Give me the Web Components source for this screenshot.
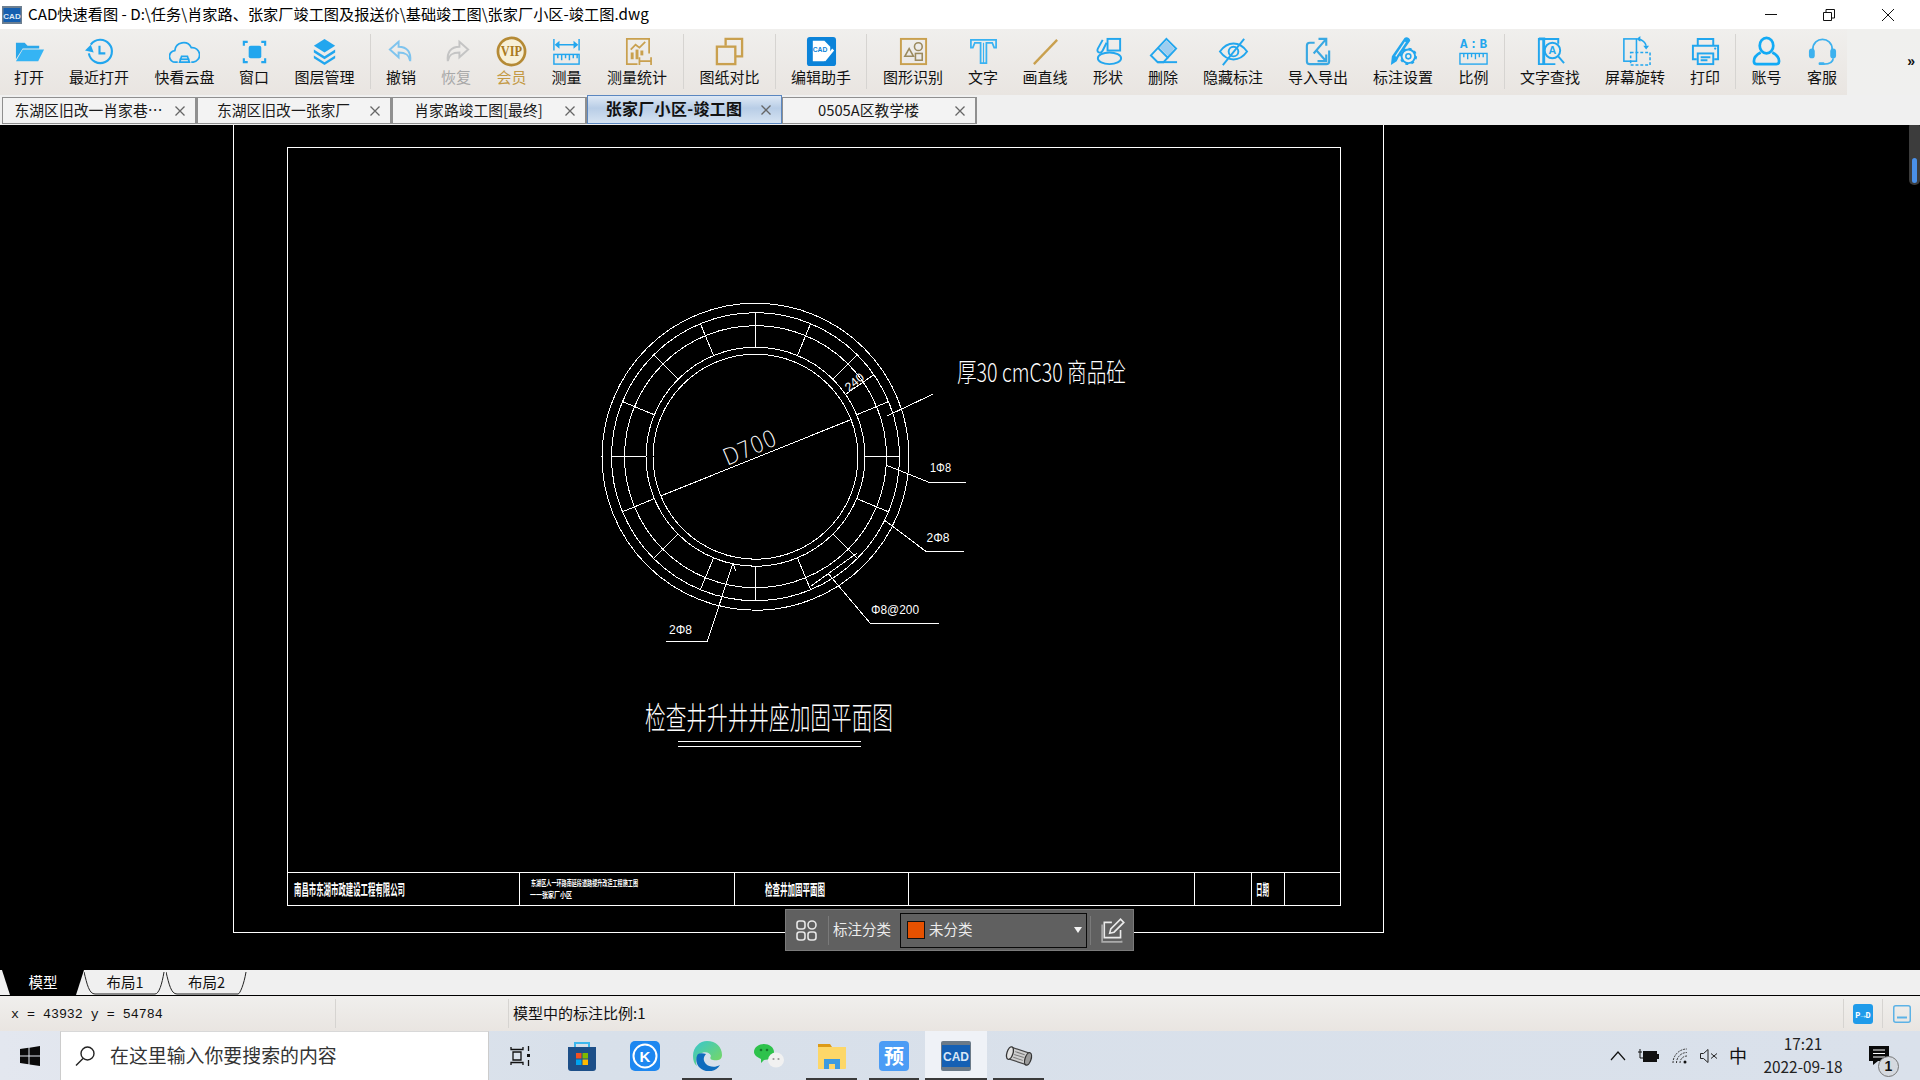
<!DOCTYPE html>
<html lang="zh-CN">
<head>
<meta charset="utf-8">
<title>CAD快速看图</title>
<style>
    html, body { margin: 0; padding: 0; background: #000; }
    body {
        width: 1920px;
        height: 1080px;
        overflow: hidden;
        display: flex;
        flex-direction: column;
        font-family: "Noto Sans CJK SC", "Liberation Sans", sans-serif;
    }
</style>
</head>
<body>
    <cad-title-bar>CAD快速看图 - D:\任务\肖家路、张家厂竣工图及报送价\基础竣工图\张家厂小区-竣工图.dwg</cad-title-bar>
    <cad-toolbar></cad-toolbar>
    <cad-tab-bar>
        <cad-tab>东湖区旧改一肖家巷…</cad-tab>
        <cad-tab>东湖区旧改一张家厂</cad-tab>
        <cad-tab>肖家路竣工图[最终]</cad-tab>
        <cad-tab active>张家厂小区-竣工图</cad-tab>
        <cad-tab>0505A区教学楼</cad-tab>
    </cad-tab-bar>
    <cad-canvas>
        <cad-mark-panel></cad-mark-panel>
    </cad-canvas>
    <cad-layout-tabs></cad-layout-tabs>
    <cad-status-bar></cad-status-bar>
    <win-taskbar></win-taskbar>

<script>
    const BLUE = '#22a6ee';
    const GOLD = '#c9a04e';

    // toolbar icons, all on a 32x32 box
    const ICONS = {
        open: `<path d="M2 7h9l3 3h12v3H9L2 24z" fill="#2aa7ea"/><path d="M9 14h22l-6 12H2z" fill="#35b4f4"/>`,
        recent: `<g fill="none" stroke="${BLUE}" stroke-width="2.2"><path d="M7 9a12 12 0 1 1-2 9"/><path d="M16 10v8h6"/></g><path d="M1 15l6-6 3 8z" fill="${BLUE}"/>`,
        cloud: `<g fill="none" stroke="${BLUE}" stroke-width="1.8"><path d="M9 27H7a6 6 0 0 1-1-12 9 9 0 0 1 17-3 7.500 7.500 0 0 1 2 15h-2"/><path d="M11 27l2-6h6l2 6z"/><path d="M11 24h10"/></g>`,
        window: `<rect x="10" y="10" width="13" height="13" rx="2" fill="${BLUE}"/><g fill="none" stroke="${BLUE}" stroke-width="2.200"><path d="M5 10V6h4M23 6h4v4M27 23v4h-4M9 27H5v-4"/></g>`,
        layers: `<g fill="${BLUE}"><path d="M16 3l11 7-11 7-11-7z"/><path d="M5 14l11 7 11-7v3l-11 7-11-7z"/><path d="M5 20l11 7 11-7v3l-11 7-11-7z"/></g>`,
        undo: `<path d="M13 6L4 14l9 8v-5c7 0 11 2 12 9 1-9-3-15-12-15z" fill="none" stroke="#7fc4ee" stroke-width="2"/>`,
        redo: `<path d="M19 6l9 8-9 8v-5c-7 0-11 2-12 9-1-9 3-15 12-15z" fill="none" stroke="#c4c4c4" stroke-width="2"/>`,
        vip: `<circle cx="16" cy="16" r="14" fill="#f7f0d8" stroke="#b58a35" stroke-width="2.800"/><text x="16" y="20.500" text-anchor="middle" font-family="Liberation Serif" font-weight="700" font-size="14" textLength="22" lengthAdjust="spacingAndGlyphs" fill="#a97a20">VIP</text>`,
        measure: `<g fill="none" stroke="${BLUE}" stroke-width="1.500"><path d="M3 3v12M29 3v12M5 9h22"/><path d="M5 9l3-2.500v5zM27 9l-3-2.500v5z" fill="${BLUE}"/><rect x="3" y="19" width="26" height="10"/><path d="M7 19v4M11 19v6M15 19v4M19 19v6M23 19v4M27 19v4"/></g>`,
        stats: `<g fill="none" stroke="${GOLD}" stroke-width="1.800"><path d="M28 18V3H5v26h11"/><path d="M9 14l5-5 4 3 6-6"/></g><g fill="${GOLD}"><rect x="9" y="17" width="3" height="7"/><rect x="14" y="14" width="3" height="10"/><rect x="19" y="15" width="3" height="5"/></g><path d="M18 26h12M18 22v8M30 22v8" stroke="${GOLD}" stroke-width="1.800" fill="none"/>`,
        compare: `<g fill="none" stroke="${GOLD}" stroke-width="2.400"><path d="M12 10V3h17v18h-7"/><rect x="3" y="11" width="19" height="18"/></g>`,
        helper: `<rect x="1" y="1" width="30" height="30" rx="3" fill="#0b83d9"/><path d="M7 5h12l6 6v6l-6 9H7z" fill="#fff"/><text x="14.500" y="17" text-anchor="middle" font-family="Liberation Sans" font-weight="700" font-size="7" fill="#0b83d9">CAD</text><path d="M18 25l9-12 2 2-9 11z" fill="#fff"/>`,
        recognize: `<rect x="3" y="3" width="26" height="26" fill="none" stroke="${GOLD}" stroke-width="2"/><g fill="none" stroke="#9b8a5e" stroke-width="1.600"><path d="M7 21l4.500-8 4.500 8z"/><circle cx="21" cy="11" r="4"/><rect x="18" y="18" width="7" height="7"/></g>`,
        text: `<path d="M3 4h26v8h-2l-2-5h-6v21h-6V7H7l-2 5H3z" fill="none" stroke="#39b2f2" stroke-width="1.800"/><path d="M16 7v21" stroke="#39b2f2" stroke-width="1.200"/>`,
        line: `<path d="M4 29L28 4" stroke="${GOLD}" stroke-width="2.400"/>`,
        shape: `<g fill="none" stroke="${BLUE}" stroke-width="2"><rect x="15" y="3" width="13" height="12"/><ellipse cx="17" cy="23" rx="12" ry="6"/><path d="M10 4L5 13c-2 4 3 6 5 2l4-8"/></g>`,
        eraser: `<path d="M19 5l8 8-6 8-9-9z" fill="#9ccdf0"/><g fill="none" stroke="${BLUE}" stroke-width="2"><path d="M19 3l10 10-13 14H10l-7-7z"/><path d="M10 27h20"/><path d="M10 12l11 11"/></g>`,
        hide: `<g fill="none" stroke="${BLUE}" stroke-width="2"><path d="M2 16c8-11 20-11 28 0-8 11-20 11-28 0z"/><circle cx="16" cy="16" r="5"/><path d="M5 30L27 3"/></g>`,
        transfer: `<g fill="none" stroke="#39a8e2" stroke-width="2.200"><path d="M12 7H7a3 3 0 0 0-3 3v16a3 3 0 0 0 3 3h17a3 3 0 0 0 3-3V15"/><path d="M11 18L24 3M16 3h8v7"/><path d="M15 26h9v-7M23 25L14 15"/></g>`,
        marksetting: `<path d="M3 30l1-9L17 2c2-2 6 0 6 3L11 22l-2 4z" fill="${BLUE}"/><path d="M8 21l10-15" stroke="#f0efed" stroke-width="1.200"/><circle cx="21" cy="21" r="7" fill="#f0efed" stroke="${BLUE}" stroke-width="2"/><circle cx="21" cy="21" r="8" fill="none" stroke="${BLUE}" stroke-width="2" stroke-dasharray="3 3.280"/><circle cx="21" cy="21" r="2.600" fill="none" stroke="${BLUE}" stroke-width="1.600"/>`,
        ratio: `<text x="16" y="12" text-anchor="middle" font-family="Liberation Mono" font-weight="700" font-size="13" textLength="28" fill="${BLUE}">A:B</text><g fill="none" stroke="${BLUE}" stroke-width="1.400"><rect x="2" y="18" width="28" height="11"/><path d="M6 18v4M10 18v6M14 18v4M18 18v6M22 18v4M26 18v4"/></g>`,
        find: `<g fill="none" stroke="${BLUE}" stroke-width="2"><path d="M24 8V3H4v26h17"/><path d="M4 3h5v26"  stroke-width="3"/><circle cx="18" cy="15" r="8"/><path d="M24 21l6 7"/></g><text x="18" y="19" text-anchor="middle" font-family="Liberation Sans" font-weight="700" font-size="11" fill="${BLUE}">A</text>`,
        rotate: `<g fill="none" stroke="${BLUE}" stroke-width="1.600"><rect x="4" y="3" width="13" height="23"/><rect x="11" y="17" width="20" height="13" stroke-dasharray="3 2"/><path d="M19 3c4 1 7 3 8 7"/></g><path d="M21 0v6l-4-3zM24 10h6l-3 4z" fill="${BLUE}"/>`,
        print: `<g fill="none" stroke="${BLUE}" stroke-width="2"><path d="M8 10V3h16v7"/><path d="M7 24H3V10h26v14h-4"/><rect x="8" y="18" width="16" height="11"/><path d="M11 22h10M11 25h7"/></g><circle cx="26" cy="13" r="1.200" fill="${BLUE}"/>`,
        account: `<g fill="none" stroke="#12aaf5" stroke-width="2.800"><ellipse cx="16" cy="10" rx="7" ry="8"/><path d="M10 17c-4 2-7 5-7 9 0 2 1 3 3 3h20c2 0 3-1 3-3 0-4-3-7-7-9"/></g>`,
        service: `<path d="M6 17v-3C6 0 26 0 26 14v3" fill="none" stroke="#3db1ee" stroke-width="1.800"/><rect x="2" y="13" width="6" height="10" rx="3" fill="#3db1ee"/><rect x="24" y="13" width="6" height="10" rx="3" fill="#3db1ee"/><path d="M27 23c0 4-4 6-10 6" fill="none" stroke="#3db1ee" stroke-width="1.800"/><rect x="12" y="27" width="6" height="3" rx="1" fill="#3db1ee"/>`
    };

    const TOOLS = [
        ['open', '打开', 58], ['recent', '最近打开', 82], ['cloud', '快看云盘', 89], ['window', '窗口', 50], ['layers', '图层管理', 91], 0,
        ['undo', '撤销', 60], ['redo', '恢复', 50, '#a8a8a8'], ['vip', '会员', 61, '#c49a45'], ['measure', '测量', 49], ['stats', '测量统计', 92], 0,
        ['compare', '图纸对比', 91], 0,
        ['helper', '编辑助手', 90], 0,
        ['recognize', '图形识别', 92], ['text', '文字', 48], ['line', '画直线', 76], ['shape', '形状', 50], ['eraser', '删除', 60], ['hide', '隐藏标注', 80], ['transfer', '导入导出', 90], ['marksetting', '标注设置', 80], ['ratio', '比例', 61], 0,
        ['find', '文字查找', 90], ['rotate', '屏幕旋转', 80], ['print', '打印', 60], 0,
        ['account', '账号', 61], ['service', '客服', 50]
    ];

    class CadTitleBar extends HTMLElement {
        constructor() {
            super();
            this.attachShadow({ mode: 'open' }).innerHTML = `
                <style>
                    :host { display: flex; align-items: center; height: 29px; background: #fff; color: #000; font-size: 15.200px; flex: none; }
                    .logo { margin: 0 6px 0 2px; flex: none; }
                    .caption { flex: 1; white-space: nowrap; line-height: 27px; padding-bottom: 2px; }
                    .ctl { width: 58.5px; height: 29px; display: flex; align-items: center; justify-content: center; flex: none; }
                    .end { width: 3px; }
                </style>
                <svg class="logo" width="20" height="18" viewBox="0 0 20 18">
                    <rect width="20" height="18" fill="#6d7f90"/><rect x="1.500" y="2" width="17" height="14" fill="#155fb0"/>
                    <text x="10" y="12.500" text-anchor="middle" font-family="Liberation Sans" font-weight="700" font-size="8" fill="#dfe9f5">CAD</text>
                </svg>
                <span class="caption"><slot></slot></span>
                <span class="ctl"><svg width="12" height="12"><path d="M0 5.500h12" stroke="#111"/></svg></span>
                <span class="ctl"><svg width="12" height="12"><path d="M.5 3.500h8v8h-8zM3 3.500V.5h8.500V9H8.500" fill="none" stroke="#111"/></svg></span>
                <span class="ctl"><svg width="12" height="12"><path d="M0 0l12 12M12 0L0 12" stroke="#111"/></svg></span>
                <span class="end"></span>`;
        }
    }

    class CadTool extends HTMLElement {
        constructor() {
            super();
            this.attachShadow({ mode: 'open' }).innerHTML = `
                <style>
                    :host { display: flex; flex-direction: column; align-items: center; flex: none; padding-top: 7px; box-sizing: border-box; height: 66px; }
                    svg { display: block; width: 31px; height: 31px; }
                    .label { font-size: 15px; line-height: 20px; white-space: nowrap; color: var(--tool-color, #111); }
                </style>
                <svg viewBox="0 0 32 32"></svg>
                <div class="label"><slot></slot></div>`;
        }
        connectedCallback() {
            this.style.width = this.getAttribute('w') + 'px';
            this.shadowRoot.querySelector('svg').innerHTML = ICONS[this.getAttribute('icon')];
        }
    }

    class CadToolbar extends HTMLElement {
        constructor() {
            super();
            this.attachShadow({ mode: 'open' }).innerHTML = `
                <style>
                    :host { display: flex; height: 66px; flex: none; background: linear-gradient(#f0f0ee, #f0f0ef); }
                    .tools { display: flex; width: 1847px; background: linear-gradient(#f0efed, #e9e5e1); }
                    .sep { width: 1px; height: 55px; margin-top: 5px; background: #d6d4d1; flex: none; }
                    .more { flex: 1; text-align: right; padding: 24px 5px 0 0; font: 700 14px "Liberation Sans", sans-serif; color: #111; }
                </style>
                <div class="tools"></div>
                <div class="more">»</div>`;
            const box = this.shadowRoot.querySelector('.tools');
            TOOLS.forEach(t => {
                if (!t) {
                    box.insertAdjacentHTML('beforeend', '<div class="sep"></div>');
                    return;
                }
                const el = document.createElement('cad-tool');
                el.setAttribute('icon', t[0]);
                el.setAttribute('w', t[2]);
                if (t[3]) el.style.setProperty('--tool-color', t[3]);
                el.textContent = t[1];
                box.appendChild(el);
            });
        }
    }

    class CadTabBar extends HTMLElement {
        constructor() {
            super();
            this.attachShadow({ mode: 'open' }).innerHTML = `
                <style>
                    :host { display: flex; align-items: flex-end; height: 30px; padding: 0 0 1px 2px; background: #f0f0f0; flex: none; box-sizing: border-box; }
                </style>
                <slot></slot>`;
        }
    }

    class CadTab extends HTMLElement {
        constructor() {
            super();
            this.attachShadow({ mode: 'open' }).innerHTML = `
                <style>
                    :host {
                        display: flex; align-items: center; width: 195px; height: 27px; box-sizing: border-box;
                        border: 1px solid #8f8f8f; border-right-width: 2px; border-bottom-width: 1px;
                        background: #f3f3f3; color: #1a1a1a; font-size: 14.800px; position: relative;
                    }
                    :host([active]) {
                        height: 29px; border: 1px solid #5b87c0;
                        background: linear-gradient(#dfe9f5, #b8cde6 45%, #d6e3f2); font-weight: 700; font-size: 16px; letter-spacing: .3px; color: #111;
                    }
                    .name { flex: 1; text-align: center; white-space: nowrap; padding-bottom: 3px; }
                    .close { width: 12px; height: 12px; margin-right: 9px; flex: none; }
                </style>
                <span class="name"><slot></slot></span>
                <svg class="close" viewBox="0 0 12 12"><path d="M1.500 1.500l9 9M10.500 1.500l-9 9" stroke="#666" stroke-width="1.300"/></svg>`;
        }
    }

    class CadCanvas extends HTMLElement {
        constructor() {
            super();
            const cx = 755.5, cy = 456.7;
            const rings = [153.5, 144, 131, 109.5, 102.5].map(r => `<circle cx="${cx}" cy="${cy}" r="${r}"/>`).join('');
            let ticks = '';
            for (let i = 0; i < 16; i++) {
                const a = i * Math.PI / 8;
                const c = Math.cos(a), s = Math.sin(a);
                ticks += `<path d="M${cx + c * 109.5} ${cy + s * 109.5}L${cx + c * 144.5} ${cy + s * 144.5}"/>`;
            }
            this.attachShadow({ mode: 'open' }).innerHTML = `
                <style>
                    :host { display: block; position: relative; height: 845px; background: #000; flex: none; overflow: hidden; }
                    svg { position: absolute; left: 0; top: 0; }
                    .thumb { position: absolute; right: 0; top: -3px; width: 11px; height: 63px; background: #3c3c3c; border-radius: 5px; }
                    .thumb i { position: absolute; left: 3px; top: 36px; width: 5px; height: 25px; background: #4a90e8; border-radius: 3px; }
                    text { fill: #fff; font-family: "Noto Sans CJK SC", sans-serif; font-weight: 400; }
                    .latin { font-family: "DejaVu Sans", sans-serif; font-weight: 200; }
                    .small { font-family: "Liberation Sans", sans-serif; font-weight: 400; }
                    .block { font-weight: 700; }
                </style>
                <svg width="1920" height="845" viewBox="0 125 1920 845">
                    <g fill="none" stroke="#fff" stroke-width="1" shape-rendering="crispEdges">
                        <path d="M233.500 125V932.500H1383.500V125"/>
                        <path d="M287.500 147.500H1340.500V905.500H287.500Z"/>
                        <path d="M287.500 872.500H1340.500M519.500 872.500V905M734.500 872.500V905M908.500 872.500V905M1194.500 872.500V905M1251.500 872.500V905M1284.500 872.500V905"/>
                        <path d="M678 741.500H860.500M678 746.500H860.500"/>
                        ${rings}${ticks}
                        <path d="M660.600 496L850 420M887 416L932.600 394.300"/>
                        <path d="M885.600 465L929.600 482.500H966M885 520.700L926 551.500H963.600M828.600 574L870.400 623.500H939M732.800 563.300L707.300 641.500H666"/>
                        <path d="M811 586L856.700 553.300M845.600 394.300L873.400 375M732.800 563.300L736 571"/>
                    </g>
                    <text class="latin" font-size="23" textLength="56" lengthAdjust="spacingAndGlyphs" transform="translate(727 466) rotate(-23)">D700</text>
                    <text class="small" font-size="12" textLength="21" lengthAdjust="spacingAndGlyphs" transform="translate(849 392) rotate(-40)">240</text>
                    <text class="small" font-size="13" x="930" y="472" textLength="21" lengthAdjust="spacingAndGlyphs">1Φ8</text>
                    <text class="small" font-size="13" x="926.500" y="542" textLength="23" lengthAdjust="spacingAndGlyphs">2Φ8</text>
                    <text class="small" font-size="13" x="871" y="614" textLength="48" lengthAdjust="spacingAndGlyphs">Φ8@200</text>
                    <text class="small" font-size="13" x="669" y="634" textLength="23" lengthAdjust="spacingAndGlyphs">2Φ8</text>
                    <text font-size="26" x="957" y="382" textLength="169" lengthAdjust="spacingAndGlyphs" style="font-weight:300">厚30 cmC30 商品砼</text>
                    <text font-size="31" x="645" y="729" textLength="248" lengthAdjust="spacingAndGlyphs" style="font-weight:300">检查井升井井座加固平面图</text>
                    <text class="block" font-size="15" x="294" y="895" textLength="111" lengthAdjust="spacingAndGlyphs">南昌市东湖市政建设工程有限公司</text>
                    <text class="block" font-size="8" x="531" y="886" textLength="107" lengthAdjust="spacingAndGlyphs">东湖区人一环路南延段道路提升改造工程施工图</text>
                    <text class="block" font-size="8" x="530" y="898" textLength="42" lengthAdjust="spacingAndGlyphs">一一张家厂小区</text>
                    <text class="block" font-size="15" x="765" y="895" textLength="60" lengthAdjust="spacingAndGlyphs">检查井加固平面图</text>
                    <text class="block" font-size="15" x="1256" y="895" textLength="13" lengthAdjust="spacingAndGlyphs">日期</text>
                </svg>
                <div class="thumb"><i></i></div>
                <slot></slot>`;
        }
    }

    class CadMarkPanel extends HTMLElement {
        constructor() {
            super();
            this.attachShadow({ mode: 'open' }).innerHTML = `
                <style>
                    :host {
                        position: absolute; left: 785px; top: 784px; width: 349px; height: 42px; box-sizing: border-box;
                        display: flex; align-items: center; background: #606060; border: 1px solid #7b7b7b; color: #ececec; font-size: 14.500px;
                    }
                    .grid { width: 21px; height: 21px; margin-left: 10px; flex: none; }
                    .sep { width: 1px; height: 29px; background: #7a7a7a; flex: none; }
                    .label { margin: 0 9px 3px 4px; white-space: nowrap; }
                    .drop { width: 187px; height: 35px; box-sizing: border-box; border: 1px solid #0a0a0a; display: flex; align-items: center; padding-left: 6px; flex: none; }
                    .swatch { width: 18px; height: 18px; box-sizing: border-box; background: #e65100; border: 1px solid #111; margin-right: 4px; flex: none; }
                    .val { flex: 1; padding-bottom: 3px; }
                    .arrow { width: 0; height: 0; border-left: 4.500px solid transparent; border-right: 4.500px solid transparent; border-top: 6px solid #f4f4f4; margin-right: 4px; }
                    .edit { width: 25px; height: 26px; margin-left: 10px; flex: none; }
                </style>
                <svg class="grid" viewBox="0 0 21 21" fill="none" stroke="#e6e6e6" stroke-width="1.600">
                    <rect x="1" y="1" width="8" height="8" rx="2.500"/><rect x="12" y="1" width="8" height="8" rx="4"/>
                    <rect x="1" y="12" width="8" height="8" rx="2.500"/><rect x="12" y="12" width="8" height="8" rx="2.500"/>
                </svg>
                <span class="sep" style="margin-left:11px"></span>
                <span class="label">标注分类</span>
                <div class="drop"><span class="swatch"></span><span class="val">未分类</span><span class="arrow"></span></div>
                <span class="sep" style="margin-left:3px"></span>
                <svg class="edit" viewBox="0 0 23 24" fill="none" stroke="#eaeaea" stroke-width="1.500">
                    <path d="M10 5H3v14h15v-7"/><path d="M1 7v16h18v-1" stroke="#aaa"/>
                    <path d="M8 15l1-4 9-9 3 3-9 9z"/>
                </svg>`;
        }
    }

    class CadLayoutTabs extends HTMLElement {
        constructor() {
            super();
            this.attachShadow({ mode: 'open' }).innerHTML = `
                <style>
                    :host { display: flex; height: 26px; box-sizing: border-box; background: #f0f0f0; border-bottom: 1px solid #000; flex: none; font-size: 14.500px; color: #111; padding-left: 2px; }
                    .tab { position: relative; height: 25px; display: flex; align-items: center; justify-content: center; flex: none; }
                    .tab svg { position: absolute; left: 0; top: 0; }
                    .tab span { position: relative; padding-bottom: 2px; font-family: "Noto Sans CJK SC", "Liberation Sans", sans-serif; }
                    .on { color: #fff; }
                </style>
                <div class="tab on" style="width:82px">
                    <svg width="82" height="25"><path d="M0 0H82L74 25H8z" fill="#000"/></svg><span>模型</span>
                </div>
                <div class="tab" style="width:82px">
                    <svg width="82" height="25" fill="none" stroke="#222"><path d="M0 2C3 14 5 24 11 24H71C75 24 78 14 80 2"/></svg><span>布局1</span>
                </div>
                <div class="tab" style="width:81px">
                    <svg width="81" height="25" fill="none" stroke="#222"><path d="M0 2C3 14 5 24 11 24H72C74 24 78 14 80 2"/></svg><span>布局2</span>
                </div>`;
        }
    }

    class CadStatusBar extends HTMLElement {
        constructor() {
            super();
            this.attachShadow({ mode: 'open' }).innerHTML = `
                <style>
                    :host { display: flex; align-items: center; height: 35px; flex: none; background: linear-gradient(#f0efed, #e9e5e1); color: #111; font-size: 15px; }
                    .xy { width: 324px; padding: 2px 0 0 11px; font: 13.300px "Liberation Mono", monospace; flex: none; }
                    .sep { width: 1px; height: 29px; background: #d6d4d1; flex: none; }
                    .cell { width: 172px; flex: none; }
                    .scale { flex: 1; padding: 0 0 2px 4px; white-space: nowrap; }
                    .btn { width: 38px; display: flex; justify-content: center; flex: none; }
                </style>
                <span class="xy">x = 43932 y = 54784</span>
                <span class="sep"></span>
                <span class="cell"></span>
                <span class="sep"></span>
                <span class="scale">模型中的标注比例:1</span>
                <span class="sep"></span>
                <span class="btn">
                    <svg width="20" height="20"><rect width="20" height="20" rx="3" fill="#1f9bea"/><text x="10" y="13.500" text-anchor="middle" font-family="Liberation Mono" font-weight="700" font-size="8.500" fill="#fff">P→D</text></svg>
                </span>
                <span class="sep"></span>
                <span class="btn" style="width:37px">
                    <svg width="18" height="18" fill="none"><rect x=".75" y=".75" width="16.500" height="16.500" rx="2" stroke="#5cb2e6" stroke-width="1.500"/><path d="M4 12.500h10" stroke="#5cb2e6" stroke-width="2"/></svg>
                </span>`;
        }
    }

    class WinTaskbar extends HTMLElement {
        constructor() {
            super();
            const apps = [
                [false, false, `<svg width="21" height="20" fill="none" stroke="#111" stroke-width="1.300"><path d="M1 1v2.500h12V1M3 6h8v8H3zM1 19v-2.500h12V19M18.500 0v5M18.500 14v6"/><rect x="17" y="8" width="3" height="3" fill="#111" stroke="none"/></svg>`],
                [false, false, `<svg width="30" height="30"><path d="M8 6V2h14v4" fill="none" stroke="#3db7ee" stroke-width="2"/><path d="M1 6h28v21a3 3 0 0 1-3 3H4a3 3 0 0 1-3-3z" fill="#1d4f88"/><rect x="9" y="12" width="5.500" height="5.500" fill="#f25022"/><rect x="15.500" y="12" width="5.500" height="5.500" fill="#7fba00"/><rect x="9" y="18.500" width="5.500" height="5.500" fill="#00a4ef"/><rect x="15.500" y="18.500" width="5.500" height="5.500" fill="#ffb900"/></svg>`],
                [false, false, `<svg width="30" height="30"><rect width="30" height="30" rx="5" fill="#1d87f0"/><circle cx="15" cy="15" r="11.500" fill="none" stroke="#fff" stroke-width="2"/><text x="15" y="20.500" text-anchor="middle" font-family="Liberation Sans" font-weight="700" font-size="15" fill="#fff">K</text></svg>`],
                [true, false, `<svg width="30" height="30" viewBox="0 0 30 30"><defs><linearGradient id="e1" x1="0" y1="0" x2="1" y2="1"><stop offset="0" stop-color="#37c6d0"/><stop offset="1" stop-color="#7ed957"/></linearGradient></defs><path d="M1 15C1 6 8 0 15 0c9 0 15 6 15 14 0 5-5 6-9 5-3 0-3-3-2-4-1-4-7-5-11-2-4 3-5 8-3 12C2 23 1 19 1 15z" fill="url(#e1)"/><path d="M6 13c-4 6-1 15 8 17 6 1 11-1 14-6-5 3-11 2-14-1-3-3-3-7 0-10-3-1-6-1-8 0z" fill="#0f6cbd"/></svg>`],
                [false, false, `<svg width="30" height="28" viewBox="0 0 30 28"><path d="M10 2c5 0 10 3 10 8 0 5-5 8-10 8l-3 3v-4C3 15 0 13 0 10c0-5 5-8 10-8z" fill="#2ec24c"/><circle cx="7" cy="8" r="1.300" fill="#167a2c"/><circle cx="13" cy="8" r="1.300" fill="#167a2c"/><ellipse cx="22" cy="18" rx="8" ry="7.500" fill="#f1f1f1"/><circle cx="19.500" cy="17" r="1.100" fill="#999"/><circle cx="24.500" cy="17" r="1.100" fill="#999"/></svg>`],
                [true, false, `<svg width="28" height="28"><path d="M0 2h12l2 3H0z" fill="#dd9a17"/><path d="M0 5h28v21a1 1 0 0 1-1 1H0z" fill="#fdd768"/><path d="M6 27V17h16v10h-5v-5h-6v5z" fill="#3d9be0"/></svg>`],
                [true, false, `<svg width="30" height="30"><rect width="30" height="30" rx="4" fill="#4b9cf5"/><text x="15" y="23" text-anchor="middle" font-family="Noto Sans CJK SC" font-weight="700" font-size="20" fill="#fff">预</text></svg>`],
                [true, true, `<svg width="30" height="30"><rect width="30" height="30" rx="2" fill="#6b7a88"/><rect x="1" y="4" width="28" height="22" fill="#1560b4"/><text x="15" y="20" text-anchor="middle" font-family="Liberation Sans" font-weight="700" font-size="12" fill="#d8e6f6">CAD</text></svg>`],
                [true, false, `<svg width="30" height="24" viewBox="0 0 30 24"><g transform="rotate(18 15 12)"><rect x="6" y="6" width="18" height="12" fill="#cfcfcf" stroke="#444" stroke-width="1.200"/><ellipse cx="5.500" cy="12" rx="3" ry="6.500" fill="#e2e2e2" stroke="#333" stroke-width="1.300"/><ellipse cx="24.500" cy="12" rx="3" ry="6.500" fill="#9a9a9a" stroke="#333" stroke-width="1.300"/><path d="M10 9h10M10 12h10M10 15h10" stroke="#7a7a7a"/></g></svg>`]
            ];
            const cells = apps.map(a => `<div class="app ${a[0] ? 'run' : ''} ${a[1] ? 'cur' : ''}">${a[2]}</div>`).join('');
            this.attachShadow({ mode: 'open' }).innerHTML = `
                <style>
                    :host { display: flex; height: 50px; flex: none; background: linear-gradient(90deg, #e3e7ef, #d8e0ea 30%, #dae1eb); color: #111; align-items: stretch; }
                    .start { width: 60px; display: flex; align-items: center; justify-content: center; flex: none; }
                    .search {
                        width: 429px; box-sizing: border-box; background: #fff; border: 1px solid #ccc; border-top-color: #d8d8d8;
                        display: flex; align-items: center; padding-left: 14px; gap: 15px; font-size: 18.900px; color: #333; flex: none;
                    }
                    .search span { padding-bottom: 3px; }
                    .app { width: 62.300px; display: flex; align-items: center; justify-content: center; position: relative; flex: none; box-sizing: border-box; }
                    .run::after { content: ""; position: absolute; left: 6px; right: 6px; bottom: 0; height: 3px; background: #3a3a3a; }
                    .cur { background: #eff2f7; }
                    .cur::after { left: 0; right: 0; }
                    .tray { flex: 1; display: flex; align-items: center; justify-content: flex-end; }
                    .tray > * { flex: none; }
                    .ime { font-size: 18px; margin: 0 13px 2px 11px; }
                    .clock { width: 86px; text-align: center; font-size: 15.400px; line-height: 23px; margin-right: 23px; padding-bottom: 3px; color: #222; }
                    .note { position: relative; width: 31px; height: 50px; margin-right: 20px; }
                    .note svg { position: absolute; left: 0; top: 15px; }
                    .badge { position: absolute; left: 9px; top: 25px; width: 19px; height: 19px; border-radius: 50%; background: #d5d9df; border: 1px solid #777; text-align: center; font: 700 14px/19px "Liberation Sans", sans-serif; }
                </style>
                <div class="start">
                    <svg width="20" height="20"><path d="M0 3l8.500-1.200V9.500H0zM9.500 1.700L20 0v9.500H9.500zM0 10.500h8.500v7.700L0 17zM9.500 10.500H20V20L9.500 18.400z" fill="#0a0a0a"/></svg>
                </div>
                <div class="search">
                    <svg width="20" height="20" fill="none" stroke="#222" stroke-width="1.400"><circle cx="12.500" cy="7.500" r="6.500"/><path d="M8 12.500L1 19.500"/></svg>
                    <span>在这里输入你要搜索的内容</span>
                </div>
                ${cells}
                <div class="tray">
                    <svg width="16" height="10" style="margin-right:12px" fill="none" stroke="#111" stroke-width="1.200"><path d="M1 9l7-8 7 8"/></svg>
                    <svg width="21" height="14" style="margin-right:13px"><path d="M0 3h4M2 0v6M2 6v3h3" stroke="#111" fill="none"/><rect x="5" y="2" width="14" height="11" fill="#111"/><rect x="19" y="5" width="2" height="5" fill="#111"/></svg>
                    <svg width="16" height="16" style="margin-right:12px" fill="none" stroke="#333"><path d="M1 15A14 14 0 0 1 15 1M4.500 15A10.500 10.500 0 0 1 15 4.500M8 15A7 7 0 0 1 15 8" stroke-dasharray="2 1"/><circle cx="13" cy="14" r="1.500" fill="#111" stroke="none"/></svg>
                    <svg width="18" height="14" fill="none" stroke="#222"><path d="M.5 4.500h3L8 .5v13l-4.500-4h-3zM11 4.500l6 5M17 4.500l-6 5"/></svg>
                    <span class="ime">中</span>
                    <div class="clock">17:21<br>2022-09-18</div>
                    <div class="note">
                        <svg width="20" height="19"><path d="M0 0h20v15H9l-5 4v-4H0z" fill="#0a0a0a"/><path d="M4 4h12M4 7.500h12M4 11h12" stroke="#fff"/></svg>
                        <span class="badge">1</span>
                    </div>
                </div>`;
        }
    }

    customElements.define('cad-title-bar', CadTitleBar);
    customElements.define('cad-tool', CadTool);
    customElements.define('cad-toolbar', CadToolbar);
    customElements.define('cad-tab-bar', CadTabBar);
    customElements.define('cad-tab', CadTab);
    customElements.define('cad-canvas', CadCanvas);
    customElements.define('cad-mark-panel', CadMarkPanel);
    customElements.define('cad-layout-tabs', CadLayoutTabs);
    customElements.define('cad-status-bar', CadStatusBar);
    customElements.define('win-taskbar', WinTaskbar);
</script>
</body>
</html>
